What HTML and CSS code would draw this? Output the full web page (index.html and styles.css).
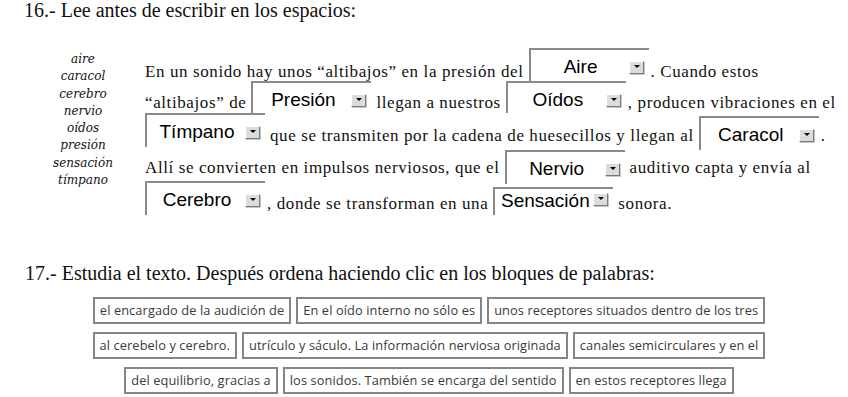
FILE: index.html
```html
<!DOCTYPE html>
<html lang="es">
<head>
<meta charset="UTF-8">
<meta name="viewport" content="width=device-width, initial-scale=1.0">
<title>El oído - ejercicios</title>
<link rel="stylesheet" href="styles.css">
</head>
<body>
<h2 class="title title-16">16.- Lee antes de escribir en los espacios:</h2>

<div class="exercise">
    <ul class="word-list">
        <li>aire</li>
        <li>caracol</li>
        <li>cerebro</li>
        <li>nervio</li>
        <li>oídos</li>
        <li>presión</li>
        <li>sensación</li>
        <li>tímpano</li>
    </ul>

    <div class="passage">
        <div class="line line-1">
            <span class="txt">En un sonido hay unos “altibajos” en la presión del</span>
            <span class="pick"><span class="value">Aire</span><span class="drop"></span></span>
            <span class="txt punct">. Cuando estos</span>
        </div>
        <div class="line line-2">
            <span class="txt">“altibajos” de</span>
            <span class="pick pick-low"><span class="value">Presión</span><span class="drop"></span></span>
            <span class="txt">llegan a nuestros</span>
            <span class="pick pick-low"><span class="value">Oídos</span><span class="drop"></span></span>
            <span class="txt punct">, producen vibraciones en el</span>
        </div>
        <div class="line line-3">
            <span class="pick pick-top first"><span class="value">Tímpano</span><span class="drop"></span></span>
            <span class="txt">que se transmiten por la cadena de huesecillos y llegan al</span>
            <span class="pick"><span class="value">Caracol</span><span class="drop"></span></span>
            <span class="txt punct">.</span>
        </div>
        <div class="line line-4">
            <span class="txt">Allí se convierten en impulsos nerviosos, que el</span>
            <span class="pick"><span class="value">Nervio</span><span class="drop"></span></span>
            <span class="txt">auditivo capta y envía al</span>
        </div>
        <div class="line line-5">
            <span class="pick first"><span class="value">Cerebro</span><span class="drop"></span></span>
            <span class="txt punct">, donde se transforman en una</span>
            <span class="pick pick-short"><span class="value">Sensación</span><span class="drop"></span></span>
            <span class="txt">sonora.</span>
        </div>
    </div>
</div>

<h2 class="title title-17">17.- Estudia el texto. Después ordena haciendo clic en los bloques de palabras:</h2>

<div class="blocks">
    <div class="block-row">
        <span class="block">el encargado de la audición de</span>
        <span class="block">En el oído interno no sólo es</span>
        <span class="block">unos receptores situados dentro de los tres</span>
    </div>
    <div class="block-row">
        <span class="block">al cerebelo y cerebro.</span>
        <span class="block">utrículo y sáculo. La información nerviosa originada</span>
        <span class="block">canales semicirculares y en el</span>
    </div>
    <div class="block-row">
        <span class="block">del equilibrio, gracias a</span>
        <span class="block">los sonidos. También se encarga del sentido</span>
        <span class="block">en estos receptores llega</span>
    </div>
</div>
</body>
</html>
```

FILE: styles.css
```css
body {
    margin: 0;
    padding: 0;
    background: #fff;
    color: #111;
    font-family: "Liberation Serif", "Times New Roman", serif;
}
.title {
    margin: 0;
    font-size: 20px;
    font-weight: normal;
    line-height: 20px;
    color: #111;
}
.title-16 {
    padding-left: 24px;
}
.title-17 {
    padding-left: 25px;
    margin-top: 48px;
}
.exercise {
    display: flex;
    margin-top: 28px;
}
.word-list {
    list-style: none;
    margin: 3px 0 0 43px;
    padding: 0;
    width: 80px;
    text-align: center;
    font-family: "DejaVu Serif", serif;
    font-style: italic;
    font-size: 12px;
    line-height: 17.3px;
}
.passage {
    margin-left: 22px;
    font-size: 17px;
    letter-spacing: 0.6px;
}
.line {
    display: flex;
    align-items: flex-end;
    white-space: nowrap;
}
.txt {
    line-height: 20px;
}
.punct {
    margin-left: -3px;
}
.line-1 { height: 34px; }
.line-2 { height: 31px; }
.line-3 { height: 37px; }
.line-3 .txt { margin-bottom: 4px; }
.line-4 { height: 34px; }
.line-4 .txt { margin-bottom: 6px; }
.line-5 { height: 31px; }
.line-5 .txt { margin-bottom: 1px; }

/* fake drop-down boxes */
.pick {
    display: flex;
    align-items: flex-start;
    box-sizing: border-box;
    width: 120px;
    height: 34px;
    margin: 0 5px;
    padding: 6px 5px 0 2px;
    border-top: 2px solid #8a8a8a;
    border-left: 2px solid #8a8a8a;
    font-family: "Liberation Sans", Arial, sans-serif;
    font-size: 19px;
    letter-spacing: 0;
    color: #000;
}
.pick.first {
    margin-left: 0;
}
.pick-low {
    height: 32px;
}
.pick-top {
    align-self: flex-start;
}
.pick-short {
    height: 28px;
    padding-top: 1px;
}
.pick-short .drop {
    margin-top: 3px;
}
.value {
    flex: 1;
    text-align: center;
    line-height: 22px;
}
.drop {
    position: relative;
    flex: none;
    box-sizing: border-box;
    width: 15px;
    height: 13px;
    margin-top: 5px;
    background: #dcdcdc;
    border-top: 1px solid #fff;
    border-left: 1px solid #fff;
    border-right: 1px solid #7a7a7a;
    border-bottom: 1px solid #7a7a7a;
    box-shadow: 1px 1px 0 #c8c8c8;
}
.drop::after {
    content: "";
    position: absolute;
    left: 4px;
    top: 3px;
    border-left: 3px solid transparent;
    border-right: 3px solid transparent;
    border-top: 3px solid #000;
}

/* word blocks */
.blocks {
    margin-top: 14px;
    padding-left: 10px;
}
.block-row {
    display: flex;
    justify-content: center;
    gap: 5px;
    margin-bottom: 8px;
}
.block {
    box-sizing: border-box;
    height: 27px;
    padding: 0 5px;
    border: 2px solid #858585;
    font-family: "Open Sans", sans-serif;
    font-size: 12.8px;
    letter-spacing: 0.1px;
    line-height: 23px;
    color: #3a3a3a;
    white-space: nowrap;
}
```
